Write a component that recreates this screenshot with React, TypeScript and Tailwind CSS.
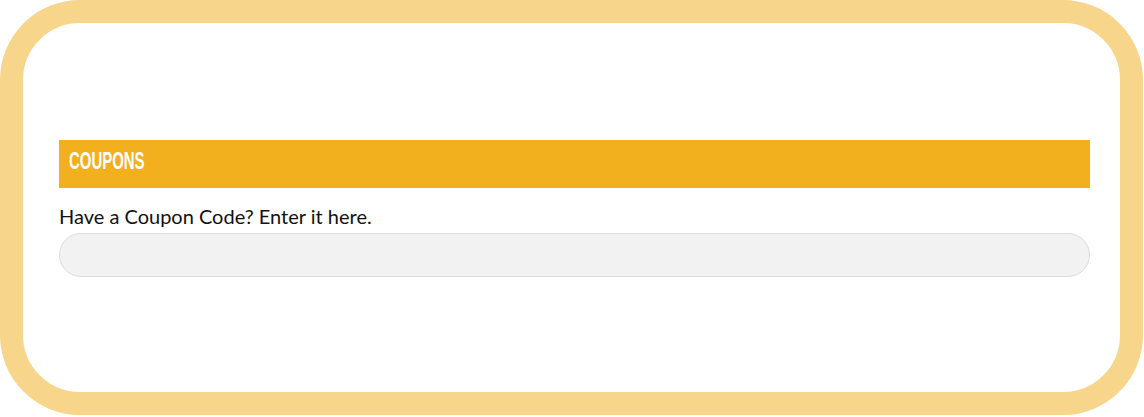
export default function App() {
  return (
    <div className="h-[417px] w-[1144px] bg-white">
      <div className="h-[415px] w-[1143px] rounded-[80px] border-[23px] border-[#f7d68c] bg-white pl-[36px] pr-[30px] pt-[117px]">
        <div className="flex h-[48px] items-center bg-[#f2af1e] pb-[5px] pl-[10px]">
          <span
            className="inline-block origin-left scale-x-[0.65] text-[23px] font-bold uppercase leading-none text-white"
            style={{ fontFamily: '"Liberation Sans", Arial, sans-serif' }}
          >
            Coupons
          </span>
        </div>
        <label
          className="mt-[15px] block text-[20px] leading-[26px] text-[#111]"
          style={{ fontFamily: "Lato, sans-serif" }}
        >
          Have a Coupon Code? Enter it here.
        </label>
        <input
          type="text"
          className="mt-[4px] block h-[44px] w-full rounded-full border border-[#dcdcdc] bg-[#f2f2f3] px-4 outline-none"
        />
      </div>
    </div>
  );
}
